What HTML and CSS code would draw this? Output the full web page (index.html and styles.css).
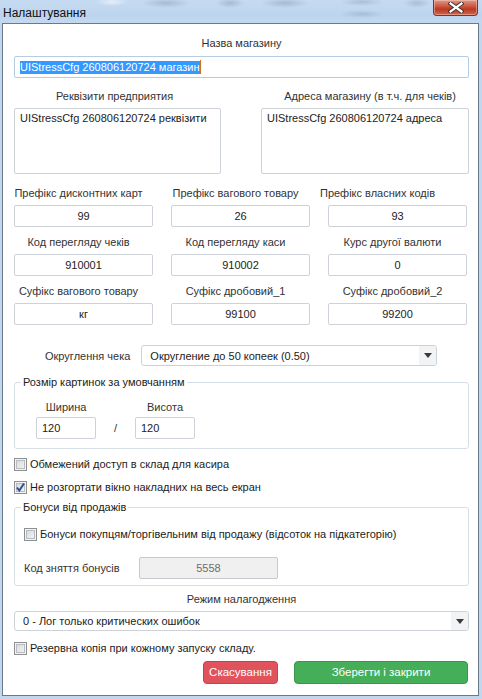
FILE: index.html
```html
<!DOCTYPE html>
<html lang="uk">
<head>
<meta charset="utf-8">
<title>Налаштування</title>
<link rel="stylesheet" href="styles.css">
</head>
<body>
<div class="window">
  <header class="titlebar">
    <span class="title">Налаштування</span>
    <button class="close" type="button" aria-label="Закрити">
      <svg width="16" height="11" viewBox="0 0 16 11">
        <path d="M2.5 1.5 L13.5 9.5 M13.5 1.5 L2.5 9.5" stroke="#3a2a2a" stroke-width="4" stroke-linecap="square"/>
        <path d="M2.5 1.5 L13.5 9.5 M13.5 1.5 L2.5 9.5" stroke="#ffffff" stroke-width="2.2" stroke-linecap="square"/>
      </svg>
    </button>
  </header>

  <main class="client">
    <div class="head-label">Назва магазину</div>
    <div class="input input-focus input-left">
      <span class="selected">UIStressCfg 260806120724 магазин</span><span class="caret"></span>
    </div>

    <div class="two-col">
      <div class="col">
        <div class="label">Реквізити предприятия</div>
        <div class="area">UIStressCfg 260806120724 реквізити</div>
      </div>
      <div class="col">
        <div class="label">Адреса магазину (в т.ч. для чеків)</div>
        <div class="area">UIStressCfg 260806120724 адреса</div>
      </div>
    </div>

    <div class="grid3">
      <div class="cell"><div class="label">Префікс дисконтних карт</div><div class="input">99</div></div>
      <div class="cell"><div class="label">Префікс вагового товару</div><div class="input">26</div></div>
      <div class="cell"><div class="label label-shift">Префікс власних кодів</div><div class="input">93</div></div>

      <div class="cell"><div class="label">Код перегляду чеків</div><div class="input">910001</div></div>
      <div class="cell"><div class="label">Код перегляду каси</div><div class="input">910002</div></div>
      <div class="cell"><div class="label">Курс другої валюти</div><div class="input">0</div></div>

      <div class="cell"><div class="label">Суфікс вагового товару</div><div class="input">кг</div></div>
      <div class="cell"><div class="label">Суфікс дробовий_1</div><div class="input">99100</div></div>
      <div class="cell"><div class="label">Суфікс дробовий_2</div><div class="input">99200</div></div>
    </div>

    <div class="round-row">
      <span class="label">Округлення чека</span>
      <div class="select select-round">
        <span class="select-text">Округление до 50 копеек (0.50)</span>
        <span class="select-btn"><i class="arrow"></i></span>
      </div>
    </div>

    <fieldset class="group group-size">
      <legend>Розмір картинок за умовчанням</legend>
      <div class="size-row">
        <div class="size-col">
          <div class="label">Ширина</div>
          <div class="input input-left small">120</div>
        </div>
        <span class="slash">/</span>
        <div class="size-col">
          <div class="label">Висота</div>
          <div class="input input-left small">120</div>
        </div>
      </div>
    </fieldset>

    <label class="check-row first-check"><span class="cb"></span>Обмежений доступ в склад для касира</label>
    <label class="check-row second-check"><span class="cb cb-on"><svg width="11" height="11" viewBox="0 0 11 11"><path d="M2 5.5 L4.3 8.5 L9 1.5" fill="none" stroke="#31508f" stroke-width="2"/></svg></span>Не розгортати вікно накладних на весь екран</label>

    <fieldset class="group group-bonus">
      <legend>Бонуси від продажів</legend>
      <div class="bonus-body">
        <label class="check-row"><span class="cb"></span>Бонуси покупцям/торгівельним від продажу (відсоток на підкатегорію)</label>
        <div class="code-row">
          <span class="label">Код зняття бонусів</span>
          <div class="input disabled">5558</div>
        </div>
      </div>
    </fieldset>

    <div class="head-label debug-label">Режим налагодження</div>
    <div class="select select-debug">
      <span class="select-text">0 - Лог только критических ошибок</span>
      <span class="select-btn"><i class="arrow"></i></span>
    </div>

    <label class="check-row backup-check"><span class="cb"></span>Резервна копія при кожному запуску складу.</label>

    <div class="buttons">
      <button class="btn btn-cancel" type="button">Скасування</button>
      <button class="btn btn-save" type="button">Зберегти і закрити</button>
    </div>
  </main>
</div>
</body>
</html>
```

FILE: styles.css
```css
* { box-sizing: border-box; }

body {
  margin: 0;
  font: 11px/14px "Liberation Sans", Arial, sans-serif;
  color: #333;
}

/* window frame */
.window {
  width: 482px;
  height: 699px;
  background: #c2d7ed;
  display: flex;
  flex-direction: column;
  overflow: hidden;
}

/* glass caption with the blurred app behind it */
.titlebar {
  height: 23px;
  flex: none;
  display: flex;
  align-items: flex-start;
  background:
    radial-gradient(ellipse 16px 4px at 112px 2px, rgba(255,255,255,.55), transparent),
    radial-gradient(ellipse 24px 5px at 166px 3px, rgba(110,130,155,.35), transparent),
    radial-gradient(ellipse 14px 5px at 230px 3px, rgba(110,130,155,.35), transparent),
    radial-gradient(ellipse 24px 5px at 285px 3px, rgba(110,130,155,.35), transparent),
    radial-gradient(ellipse 22px 4px at 362px 2px, rgba(110,130,155,.3), transparent),
    radial-gradient(ellipse 22px 4px at 362px 14px, rgba(110,130,155,.28), transparent),
    radial-gradient(ellipse 14px 5px at 417px 3px, rgba(110,130,155,.3), transparent),
    linear-gradient(#c6dbf1, #bcd4ee 70%, #c4d9ef);
}

.title {
  margin: 6px 0 0 3px;
  font-size: 12px;
  color: #101010;
}

.close {
  margin: 0 4px 0 auto;
  width: 45px;
  height: 16px;
  padding: 0;
  border: 1px solid #6b3a35;
  border-top: none;
  border-radius: 0 0 4px 4px;
  background: linear-gradient(#e09a88, #c9533f 45%, #b83a23 60%, #d2624a);
  display: flex;
  align-items: center;
  justify-content: center;
  box-shadow: inset 0 0 0 1px rgba(255,210,200,.45);
}

/* dialog client area */
.client {
  margin: 0 3px 0 2px;
  height: 673px;
  flex: none;
  border: 1px solid #6b7a8a;
  background: #fff;
  padding: 12px 9px 0 11px;
}

.head-label {
  text-align: center;
  height: 14px;
  color: #333;
}

.label {
  color: #333;
  white-space: nowrap;
}

.input {
  height: 22px;
  border: 1px solid #cdd2d8;
  border-radius: 2px;
  display: flex;
  align-items: center;
  justify-content: center;
  color: #222;
  background: #fff;
}

.input-left {
  justify-content: flex-start;
  padding-left: 5px;
}

.input-focus {
  margin-top: 6px;
  border-color: #b4cce4;
}

.selected {
  background: #3399ff;
  color: #fff;
  line-height: 13px;
  height: 13px;
}

.caret {
  width: 1px;
  height: 14px;
  background: #c8741f;
}

/* two multiline fields */
.two-col {
  margin-top: 11px;
  display: grid;
  grid-template-columns: 207px 208px;
  column-gap: 40px;
}

.two-col .label {
  text-align: center;
  height: 14px;
  padding-right: 6px;
}

.two-col .col:last-child .label {
  padding-right: 0;
  padding-left: 10px;
}

.area {
  margin-top: 5px;
  height: 66px;
  border: 1px solid #cdd2d8;
  border-radius: 2px;
  padding: 2px 5px;
  color: #222;
}

/* three-column code fields */
.grid3 {
  margin-top: 12px;
  display: grid;
  grid-template-columns: repeat(3, 139px);
  column-gap: 18px;
  row-gap: 8px;
}

.grid3 .label {
  text-align: center;
  height: 14px;
  padding-right: 10px;
}

/* this caption sits further left than its field */
.grid3 .label-shift {
  margin-left: -30px;
}

.grid3 .input {
  margin-top: 5px;
}

/* rounding selector */
.round-row {
  margin-top: 20px;
  display: flex;
  align-items: center;
  padding-left: 31px;
}

.select {
  display: flex;
  border: 1px solid #cdd2d8;
  border-radius: 3px;
  color: #222;
  overflow: hidden;
}

.select-round {
  margin-left: 11px;
  width: 296px;
  height: 21px;
}

.select-text {
  flex: 1;
  padding-left: 8px;
  display: flex;
  align-items: center;
}

.select-btn {
  width: 17px;
  background: #f2f3f4;
  display: flex;
  align-items: center;
  justify-content: center;
}

.arrow {
  width: 0;
  height: 0;
  border-left: 4px solid transparent;
  border-right: 4px solid transparent;
  border-top: 5px solid #3a3a3a;
}

/* group boxes */
.group {
  margin: 0;
  padding: 0;
  border: 1px solid #d6dee6;
  border-radius: 3px;
  min-width: 0;
}

.group legend {
  margin-left: 6px;
  padding: 0 2px;
  line-height: 14px;
  color: #222;
}

.group-size {
  margin-top: 9px;
}

.size-row {
  padding: 11px 0 9px 21px;
  display: flex;
  align-items: flex-end;
}

.size-col {
  width: 60px;
  display: flex;
  flex-direction: column;
}

.size-col .label {
  text-align: center;
  height: 14px;
}

.size-col .input {
  margin-top: 3px;
}

.slash {
  width: 39px;
  text-align: center;
  height: 22px;
  line-height: 22px;
  color: #333;
}

/* check boxes */
.check-row {
  display: flex;
  align-items: center;
  height: 16px;
  color: #1c1c1c;
  white-space: nowrap;
}

.cb {
  width: 13px;
  height: 13px;
  margin-right: 3px;
  flex: none;
  border: 1px solid #8e8f8f;
  background: linear-gradient(135deg, #d4d6d9, #f7f7f7);
  box-shadow: inset 0 0 0 1px #f4f4f4, inset 0 0 0 2px #b8bcc2;
  display: flex;
  align-items: center;
  justify-content: center;
}

.cb-on svg {
  display: block;
}

.first-check { margin-top: 7px; }
.second-check { margin-top: 7px; }

.group-bonus {
  margin-top: 5px;
}

.bonus-body {
  padding: 12px 0 6px 9px;
}

.code-row {
  margin-top: 15px;
  display: flex;
  align-items: center;
}

.code-row .label {
  width: 115px;
}

.input.disabled {
  width: 139px;
  background: #f0f0f0;
  color: #6d6d6d;
  border-color: #c6cacf;
}

.debug-label {
  margin-top: 6px;
}

.select-debug {
  margin-top: 5px;
  height: 20px;
}

.backup-check { margin-top: 9px; }

/* dialog buttons */
.buttons {
  margin-top: 5px;
  display: flex;
  justify-content: flex-end;
  gap: 16px;
  padding-right: 1px;
}

.btn {
  height: 23px;
  border-radius: 4px;
  color: #fff;
  font: 11.5px/1 "Liberation Sans", Arial, sans-serif;
  padding: 0;
}

.btn-cancel {
  width: 75px;
  background: #e0525c;
  border: 1px solid #c9424c;
}

.btn-save {
  width: 174px;
  background: #44ae58;
  border: 1px solid #37984a;
}
```
